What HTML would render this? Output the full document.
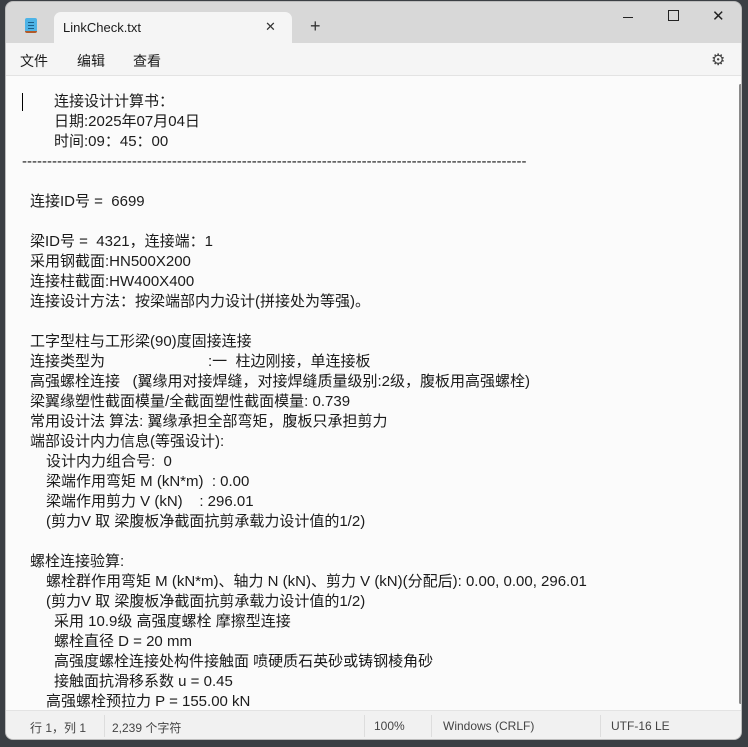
<!DOCTYPE html>
<html><head><meta charset="utf-8"><style>
*{margin:0;padding:0;box-sizing:border-box}
body{width:748px;height:747px;background:#3b3f44;position:relative;overflow:hidden;font-family:"Liberation Sans","Noto Sans CJK SC",sans-serif;color:#1b1b1b}
.win{position:absolute;left:5px;top:1px;width:737px;height:739px;background:#d8d8d8;border:1px solid #bdbdbd;border-radius:8px;overflow:hidden}
.tab{position:absolute;left:48px;top:10px;width:238px;height:33px;background:#f5f5f5;border-radius:7px 7px 0 0}
.menu{position:absolute;left:0;top:41px;width:737px;height:33px;background:#f5f5f5;border-bottom:1px solid #e3e3e3}
.edit{position:absolute;left:0;top:74px;width:737px;height:634px;background:#fbfbfb}
.status{position:absolute;left:0;top:708px;width:737px;height:31px;background:#f1f1f1;border-top:1px solid #e3e3e3;font-size:12px;color:#444}
.l{position:absolute;font-size:15px;white-space:pre;line-height:20px}
.s{position:absolute;top:8px;white-space:pre}
.sep{position:absolute;top:4px;width:1px;height:22px;background:#ddd}
</style></head><body>
<div class="win">
 <div class="tab"></div>
 <div style="position:absolute;left:19px;top:16px;width:12px;height:15px;background:#4db3e6;border-radius:2px;border-bottom:2px solid #b05a2a"></div>
 <div style="position:absolute;left:22px;top:20px;width:6px;height:1px;background:#1a5f8a;box-shadow:0 3px 0 #1a5f8a,0 6px 0 #1a5f8a"></div>
 <div style="position:absolute;left:57px;top:18px;font-size:13px">LinkCheck.txt</div>
 <div style="position:absolute;left:259px;top:17px;font-size:13px;color:#333">✕</div>
 <div style="position:absolute;left:304px;top:14px;font-size:18px;color:#333">+</div>
 <div style="position:absolute;left:617px;top:15px;width:10px;height:1px;background:#222"></div>
 <div style="position:absolute;left:662px;top:8px;width:11px;height:11px;border:1px solid #222"></div>
 <div style="position:absolute;left:706px;top:5px;font-size:15px;color:#222">✕</div>
 <div class="menu">
  <div style="position:absolute;left:14px;top:8px;font-size:14px">文件</div>
  <div style="position:absolute;left:71px;top:8px;font-size:14px">编辑</div>
  <div style="position:absolute;left:127px;top:8px;font-size:14px">查看</div>
  <div style="position:absolute;left:705px;top:7px;font-size:16px;color:#444">⚙</div>
 </div>
 <div class="edit">
  <div style="position:absolute;left:16px;top:17px;width:1px;height:18px;background:#000"></div>
  <div style="position:absolute;right:1px;top:8px;width:3px;height:620px;background:#8a8a8a;border-radius:2px"></div>
 </div>
 <div class="status">
  <div class="s" style="left:24px">行 1，列 1</div><div class="sep" style="left:98px"></div>
  <div class="s" style="left:106px">2,239 个字符</div><div class="sep" style="left:358px"></div>
  <div class="s" style="left:368px">100%</div><div class="sep" style="left:425px"></div>
  <div class="s" style="left:437px">Windows (CRLF)</div><div class="sep" style="left:594px"></div>
  <div class="s" style="left:605px">UTF-16 LE</div>
 </div>
</div>
<div style="left:54px;top:92px" class="l">连接设计计算书：</div>
<div style="left:54px;top:112px" class="l">日期:2025年07月04日</div>
<div style="left:54px;top:132px" class="l">时间:09：45：00</div>
<div style="left:22px;top:152px;width:504px;overflow:hidden" class="l">------------------------------------------------------------------------------------------------------------------------</div>
<div style="left:30px;top:192px" class="l">连接ID号 =  6699</div>
<div style="left:30px;top:232px" class="l">梁ID号 =  4321，连接端：1</div>
<div style="left:30px;top:252px" class="l">采用钢截面:HN500X200</div>
<div style="left:30px;top:272px" class="l">连接柱截面:HW400X400</div>
<div style="left:30px;top:292px" class="l">连接设计方法：按梁端部内力设计(拼接处为等强)。</div>
<div style="left:30px;top:332px" class="l">工字型柱与工形梁(90)度固接连接</div>
<div style="left:30px;top:352px" class="l">连接类型为</div>
<div style="left:208px;top:352px" class="l">:一  柱边刚接，单连接板</div>
<div style="left:30px;top:372px" class="l">高强螺栓连接   (翼缘用对接焊缝，对接焊缝质量级别:2级，腹板用高强螺栓)</div>
<div style="left:30px;top:392px" class="l">梁翼缘塑性截面模量/全截面塑性截面模量: 0.739</div>
<div style="left:30px;top:412px" class="l">常用设计法 算法: 翼缘承担全部弯矩，腹板只承担剪力</div>
<div style="left:30px;top:432px" class="l">端部设计内力信息(等强设计):</div>
<div style="left:46px;top:452px" class="l">设计内力组合号:  0</div>
<div style="left:46px;top:472px" class="l">梁端作用弯矩 M (kN*m)  : 0.00</div>
<div style="left:46px;top:492px" class="l">梁端作用剪力 V (kN)    : 296.01</div>
<div style="left:46px;top:512px" class="l">(剪力V 取 梁腹板净截面抗剪承载力设计值的1/2)</div>
<div style="left:30px;top:552px" class="l">螺栓连接验算:</div>
<div style="left:46px;top:572px" class="l">螺栓群作用弯矩 M (kN*m)、轴力 N (kN)、剪力 V (kN)(分配后): 0.00, 0.00, 296.01</div>
<div style="left:46px;top:592px" class="l">(剪力V 取 梁腹板净截面抗剪承载力设计值的1/2)</div>
<div style="left:54px;top:612px" class="l">采用 10.9级 高强度螺栓 摩擦型连接</div>
<div style="left:54px;top:632px" class="l">螺栓直径 D = 20 mm</div>
<div style="left:54px;top:652px" class="l">高强度螺栓连接处构件接触面 喷硬质石英砂或铸钢棱角砂</div>
<div style="left:54px;top:672px" class="l">接触面抗滑移系数 u = 0.45</div>
<div style="left:46px;top:692px" class="l">高强螺栓预拉力 P = 155.00 kN</div>
</body></html>
